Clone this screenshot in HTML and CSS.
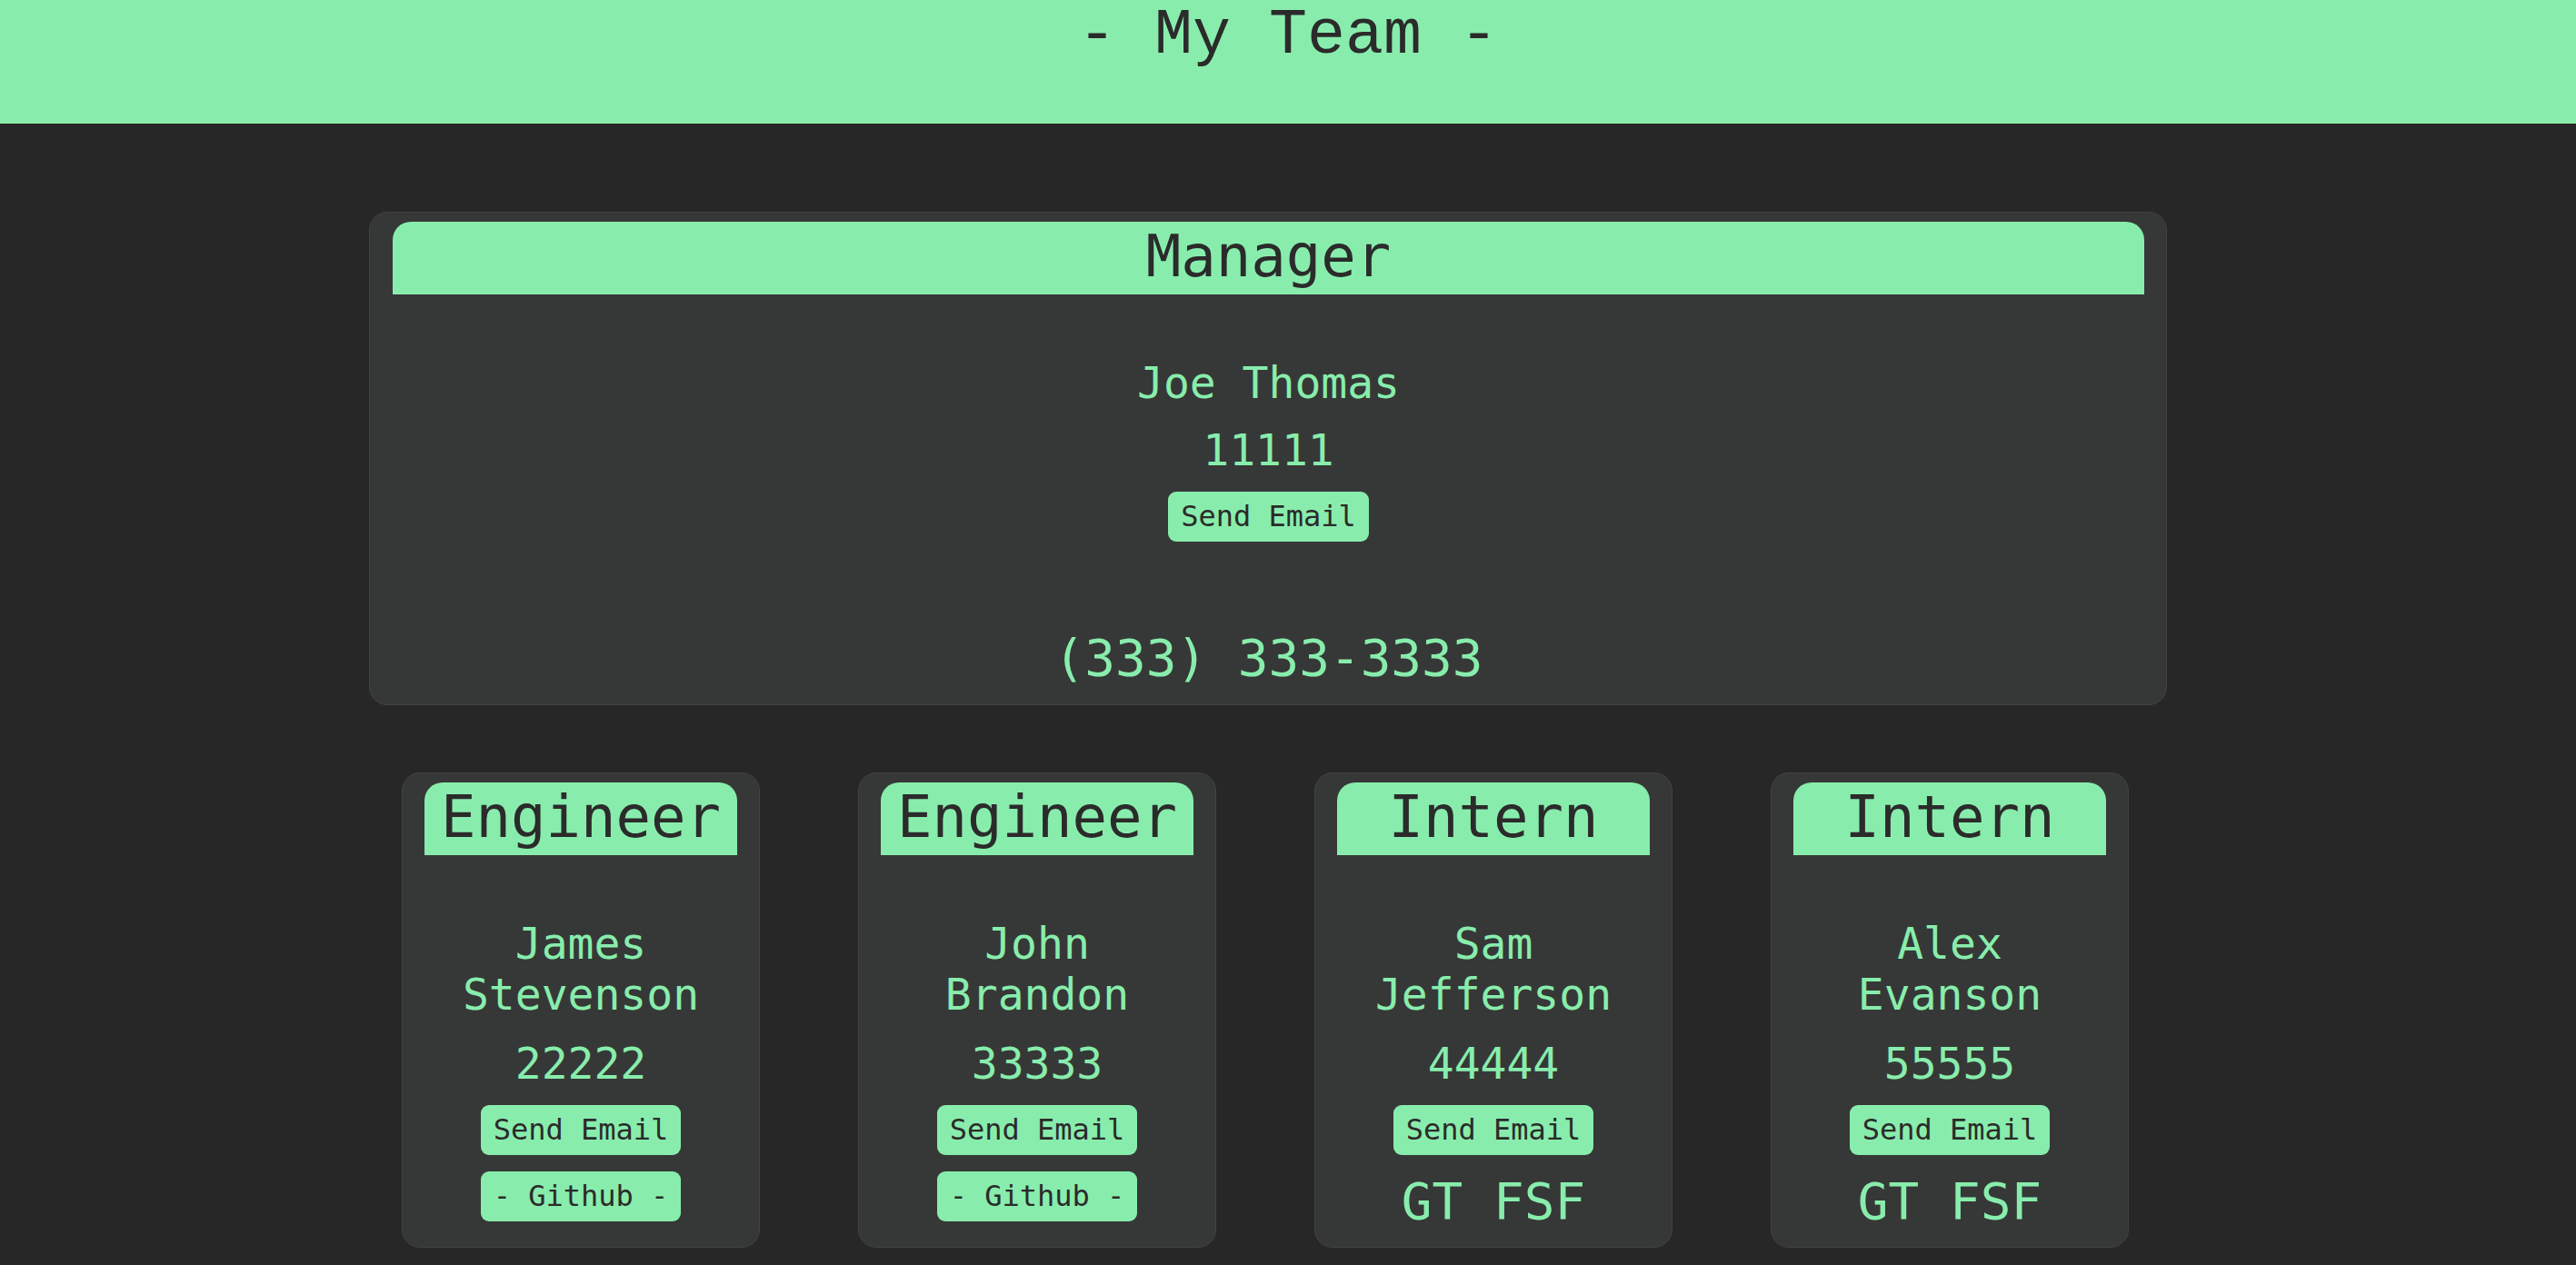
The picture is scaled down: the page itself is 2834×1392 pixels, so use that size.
FILE: index.html
```html
<!DOCTYPE html>
<html lang="en">
<head>
<meta charset="utf-8">
<title>My Team</title>
<link rel="stylesheet" href="styles.css">
</head>
<body>
<header class="top">
  <h1 class="top-title">- My Team -</h1>
</header>
<main class="team">
  <section class="card card-manager">
    <h2 class="card-role">Manager</h2>
    <div class="card-body">
      <p class="card-name">Joe Thomas</p>
      <p class="card-id">11111</p>
      <a class="btn" href="#">Send Email</a>
      <p class="card-extra card-phone">(333) 333-3333</p>
    </div>
  </section>
  <div class="team-row">
    <section class="card card-small">
      <h2 class="card-role">Engineer</h2>
      <div class="card-body">
        <p class="card-name">James Stevenson</p>
        <p class="card-id">22222</p>
        <a class="btn" href="#">Send Email</a>
        <a class="btn" href="#">- Github -</a>
      </div>
    </section>
    <section class="card card-small">
      <h2 class="card-role">Engineer</h2>
      <div class="card-body">
        <p class="card-name">John Brandon</p>
        <p class="card-id">33333</p>
        <a class="btn" href="#">Send Email</a>
        <a class="btn" href="#">- Github -</a>
      </div>
    </section>
    <section class="card card-small">
      <h2 class="card-role">Intern</h2>
      <div class="card-body">
        <p class="card-name">Sam Jefferson</p>
        <p class="card-id">44444</p>
        <a class="btn" href="#">Send Email</a>
        <p class="card-extra">GT FSF</p>
      </div>
    </section>
    <section class="card card-small">
      <h2 class="card-role">Intern</h2>
      <div class="card-body">
        <p class="card-name">Alex Evanson</p>
        <p class="card-id">55555</p>
        <a class="btn" href="#">Send Email</a>
        <p class="card-extra">GT FSF</p>
      </div>
    </section>
  </div>
</main>
</body>
</html>
```

FILE: styles.css
```css
html, body {
  margin: 0;
  padding: 0;
}

body {
  background: #272727;
  font-family: "DejaVu Sans Mono", monospace;
  color: #88edac;
}

.top {
  background: #88edac;
  height: 136px;
  text-align: center;
}

.top-title {
  margin: 0;
  font-family: "Liberation Mono", "Courier New", monospace;
  font-weight: normal;
  font-size: 70px;
  color: #2b2b2b;
}

.team {
  display: flex;
  flex-direction: column;
  padding: 97px 450px 0 406px;
}

.card {
  background: #363837;
  border: 1px solid #414342;
  border-radius: 20px;
  text-align: center;
  display: flex;
  flex-direction: column;
}

.card-manager {
  padding: 10px 24px 19px 25px;
}

.card-small {
  width: 344px;
  padding: 10px 24px 18px 24px;
}

.card-role {
  margin: 0;
  background: #88edac;
  color: #2b2b2b;
  font-weight: normal;
  font-size: 64px;
  line-height: 75px;
  padding: 1px 0 4px;
  border-radius: 20px 20px 0 0;
}

.card-body {
  display: flex;
  flex-direction: column;
  align-items: center;
  gap: 18px;
  padding-top: 69px;
}

.card-name,
.card-id {
  margin: 0;
  font-size: 48px;
  line-height: 56px;
}

.card-small .card-name {
  padding: 0 10px;
}

.card-small .card-id {
  margin-top: 2px;
}

.btn {
  display: inline-block;
  background: #88edac;
  color: #2b2b2b;
  text-decoration: none;
  font-size: 32px;
  line-height: 37px;
  padding: 9px 14px;
  border-radius: 9px;
}

.card-extra {
  margin: 0;
  font-size: 56px;
  line-height: 65px;
}

.card-phone {
  margin-top: 77px;
}

.team-row {
  display: flex;
  justify-content: center;
  gap: 108px;
  margin-top: 74px;
  margin-right: 6px;
}
```
